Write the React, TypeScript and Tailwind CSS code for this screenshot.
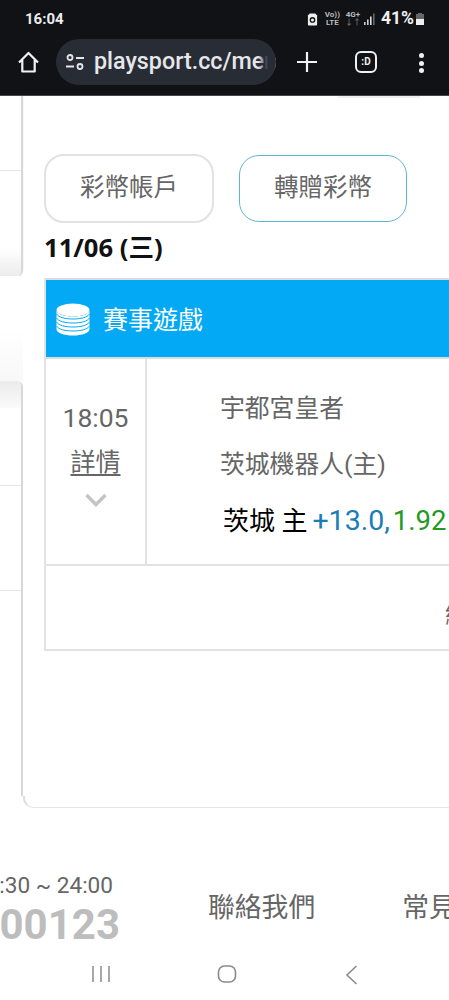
const cjk = "font-['Roboto','Noto_Sans_CJK_TC',sans-serif]"

const StatusBar = () => (
  <div className="flex h-[36px] items-center justify-between pl-[25px] pr-[24px] pt-[2px] text-white">
    <span className="text-[15px] font-bold leading-none text-[#ececec]">16:04</span>
    <div className="flex items-center">
      <svg width="11" height="15" viewBox="0 0 12 15" className="mr-[7px]">
        <path d="M3 1h6l2 2v10a1 1 0 0 1-1 1H2a1 1 0 0 1-1-1V3z" fill="#eee" />
        <circle cx="6" cy="8" r="2.4" fill="none" stroke="#111" strokeWidth="1.4" />
      </svg>
      <div className="mr-[5px] flex flex-col items-center text-[8px] font-bold leading-[8px] text-[#bbb]">
        <span>Vo))</span>
        <span>LTE</span>
      </div>
      <div className="mr-[3px] flex flex-col items-center text-[8px] font-bold leading-[8px] text-[#bbb]">
        <span>4G+</span>
        <span className="text-[#666]">↓↑</span>
      </div>
      <svg width="12" height="12" viewBox="0 0 12 12" className="mr-[5px]">
        <rect x="0" y="9" width="1.6" height="3" fill="#ccc" />
        <rect x="3" y="6.5" width="1.6" height="5.5" fill="#ccc" />
        <rect x="6" y="3.5" width="1.6" height="8.5" fill="#ddd" />
        <rect x="9" y="0.5" width="1.6" height="11.5" fill="#666" />
      </svg>
      <span className="text-[17.500px] font-bold leading-none text-[#f0f0f0]">41%</span>
      <svg width="10" height="14" viewBox="0 0 10 14" className="ml-[1px]">
        <path d="M3 1h4v1h2v11H1V2h2z" fill="#666" />
        <path d="M1 7h8v6H1z" fill="#eee" />
      </svg>
    </div>
  </div>
)

const Toolbar = () => (
  <div className="flex h-[60px] items-start border-b border-[#45474b] pl-[18px] pt-[3px]">
    <svg width="21" height="22" viewBox="0 0 21 22" fill="none" stroke="#f2f2f2" strokeWidth="2.200" strokeLinejoin="round" className="mt-[12px]">
      <path d="M1 11.500 10.500 2 20 11.500M4.300 9v11.500h12.400V9" />
    </svg>
    <div className="relative ml-[17px] flex h-[46px] w-[220px] items-center overflow-hidden rounded-full bg-[#282c35] pl-[10px]">
      <svg width="18" height="17" viewBox="0 0 18 17" fill="none" stroke="#e4e6ea" strokeWidth="1.800" className="shrink-0">
        <circle cx="4" cy="3.500" r="2.500" />
        <path d="M10 4h8M0 12.500h8" />
        <circle cx="14" cy="12.500" r="2.500" />
      </svg>
      <span className="ml-[10px] whitespace-nowrap font-['Roboto',sans-serif] text-[23.300px] font-medium leading-none text-[#e6e7eb]">
        playsport.cc/menu
      </span>
      <div className="absolute right-0 top-0 h-full w-[8px] bg-[#282c35]" />
      <div className="absolute right-[8px] top-0 h-full w-[10px] bg-gradient-to-r from-transparent to-[#282c35]" />
    </div>
    <svg width="20" height="20" viewBox="0 0 20 20" stroke="#f2f2f2" strokeWidth="2.200" className="ml-[21px] mt-[13px]">
      <path d="M10 0v20M0 10h20" />
    </svg>
    <div className="ml-[38px] mt-[12px] flex h-[22px] w-[22px] items-center justify-center rounded-[6px] border-2 border-[#f0f0f0] font-['Roboto',sans-serif] text-[10px] font-bold leading-none text-[#f0f0f0]">
      :D
    </div>
    <div className="ml-[42px] mt-[14px] flex flex-col gap-[2.500px]">
      <span className="h-[5px] w-[5px] rounded-full bg-[#f0f0f0]" />
      <span className="h-[5px] w-[5px] rounded-full bg-[#f0f0f0]" />
      <span className="h-[5px] w-[5px] rounded-full bg-[#f0f0f0]" />
    </div>
  </div>
)

const LeftRail = () => (
  <div className="flex w-[23px] shrink-0 flex-col">
    <div className="h-[180px] overflow-hidden rounded-br-[6px] border-r-2 border-[#d8d8d8] shadow-[0_1px_2px_rgba(0,0,0,0.12)]">
      <div className="h-[75px] border-b border-[#e6e6e6]" />
      <div className="h-[77px]" />
      <div className="h-[28px] bg-gradient-to-b from-white to-[#ececec]" />
    </div>
    <div className="h-[105px] bg-gradient-to-b from-white from-[50%] to-[#f8f8f8]" />
    <div className="flex-1 overflow-hidden rounded-tr-[6px] border-r-2 border-[#d8d8d8]">
      <div className="h-[27px] bg-gradient-to-b from-[#ececec] to-[#fafafa]" />
      <div className="h-[78px] border-b border-[#e6e6e6]" />
      <div className="h-[105px] border-b border-[#e6e6e6]" />
    </div>
    <div className="h-[12px]" />
  </div>
)

const CoinStack = () => (
  <svg width="34" height="33" viewBox="0 0 34 33" fill="none" className="shrink-0">
    <ellipse cx="17" cy="7" rx="16.500" ry="6.500" fill="#fff" />
    <path d="M.5 7v19c0 4 7.500 6.500 16.500 6.500S33.500 30 33.500 26V7c0 4-7.500 6.500-16.500 6.500S.5 11 .5 7z" fill="#fff" />
    <path
      d="M.5 11c2 3.500 9 5 16.500 5s14.500-1.500 16.500-5M.5 15c2 3.500 9 5 16.500 5s14.500-1.500 16.500-5M.5 19c2 3.500 9 5 16.500 5s14.500-1.500 16.500-5M.5 23c2 3.500 9 5 16.500 5s14.500-1.500 16.500-5"
      stroke="#03a9f4"
      strokeWidth="1"
    />
  </svg>
)

const MatchTable = () => (
  <div className="mt-[13px] w-[600px] border-x-2 border-b-2 border-[#e2e2e2]">
    <div className="flex h-[81px] items-center border-y-2 border-[#dcdcdc] bg-[#03a9f4] pl-[10px] pt-[2px]">
      <CoinStack />
      <span className="ml-[13px] pt-[2px] text-[25px] leading-none text-white">賽事遊戲</span>
    </div>
    <div className="flex h-[207px] border-b-2 border-[#e2e2e2]">
      <div className="flex w-[101px] shrink-0 flex-col items-center border-r-2 border-[#e2e2e2] pt-[44px] text-[#666]">
        <span className="text-[26.500px] leading-[30px]">18:05</span>
        <span className="mt-[14px] text-[25px] leading-[32px] underline underline-offset-[3px]">詳情</span>
        <svg width="22" height="14" viewBox="0 0 22 14" fill="none" stroke="#c4c4c4" strokeWidth="3.500" className="mt-[14px]">
          <path d="M1.500 2 11 11.500 20.500 2" />
        </svg>
      </div>
      <div className="flex flex-col pl-[73px] pt-[34px]">
        <span className="text-[24.800px] leading-[32px] text-[#666]">宇都宮皇者</span>
        <span className="mt-[24px] text-[24.800px] leading-[32px] text-[#666]">茨城機器人(主)</span>
        <div className="mt-[23px] flex items-baseline whitespace-nowrap pl-[3px] text-[26px] leading-[34px]">
          <span className="text-black">茨城 主</span>
          <span className="ml-[5px] text-[28.500px] text-[#1a7db5]">+13.0,</span>
          <span className="ml-[3px] text-[27.500px] text-[#229a22]">1.92</span>
        </div>
      </div>
    </div>
    <div className="flex h-[83px] items-center pl-[399px] pt-[14px]">
      <span className="text-[24px] leading-none text-[#666]">總計</span>
    </div>
  </div>
)

const MainCard = () => (
  <div className="flex min-w-0 flex-1 flex-col overflow-hidden">
    <div className="ml-[315px] h-[2px] w-[82px] bg-[#f0f0f0]" />
    <div className="pl-[21px] pt-[56px]">
      <div className="flex items-center">
        <div className="flex h-[69px] w-[170px] items-center justify-center rounded-[20px] border-2 border-[#e2e2e2] text-[24.500px] text-[#666]">
          彩幣帳戶
        </div>
        <div className="ml-[25px] flex h-[67px] w-[168px] items-center justify-center rounded-[20px] border border-[#5fb4d4] text-[24.500px] text-[#666]">
          轉贈彩幣
        </div>
      </div>
      <div className="mt-[8px] font-['Open_Sans','Noto_Sans_CJK_TC',sans-serif] text-[25.600px] font-bold leading-[34px] text-[#111]">
        11/06 (三)
      </div>
      <MatchTable />
    </div>
    <div className="mt-auto h-[12px] rounded-bl-[10px] border-b border-l-2 border-b-[#e6e6e6] border-l-[#dcdcdc]" />
  </div>
)

const Footer = () => (
  <div className="flex h-[152px] overflow-hidden">
    <div className="flex w-[120px] shrink-0 flex-col items-end overflow-hidden pt-[64px]">
      <span className="mr-[7px] shrink-0 whitespace-nowrap text-[22.600px] leading-[28px] text-[#666]">09:30 ~ 24:00</span>
      <span className="shrink-0 whitespace-nowrap text-[42px] font-bold leading-[50px] text-[#bdbdbd]">0800-000123</span>
    </div>
    <div className="ml-[88px] shrink-0 whitespace-nowrap pt-[82px] text-[26.800px] leading-[36px] text-[#666]">聯絡我們</div>
    <div className="ml-[87px] shrink-0 whitespace-nowrap pt-[82px] text-[26.800px] leading-[36px] text-[#666]">常見問題</div>
  </div>
)

const NavBar = () => (
  <div className="flex h-[40px] items-start pl-[92px] pt-[5px]">
    <svg width="18" height="18" viewBox="0 0 18 18" stroke="#8a8a8a" strokeWidth="1.500">
      <path d="M1 1v16M9 1v16M17 1v16" />
    </svg>
    <svg width="20" height="18" viewBox="0 0 20 18" fill="none" stroke="#8a8a8a" strokeWidth="1.600" className="ml-[107px]">
      <rect x="1.500" y="1" width="17" height="16" rx="6" />
    </svg>
    <svg width="13" height="20" viewBox="0 0 13 20" fill="none" stroke="#8a8a8a" strokeWidth="1.600" className="ml-[108px]">
      <path d="M11.500 1 2 10l9.500 9" />
    </svg>
  </div>
)

export default function App() {
  return (
    <div className={`h-[1000px] w-[449px] overflow-hidden bg-white ${cjk}`}>
      <div className="bg-[#101215]">
        <StatusBar />
        <Toolbar />
      </div>
      <div className="flex h-[712px]">
        <LeftRail />
        <MainCard />
      </div>
      <Footer />
      <NavBar />
    </div>
  )
}
